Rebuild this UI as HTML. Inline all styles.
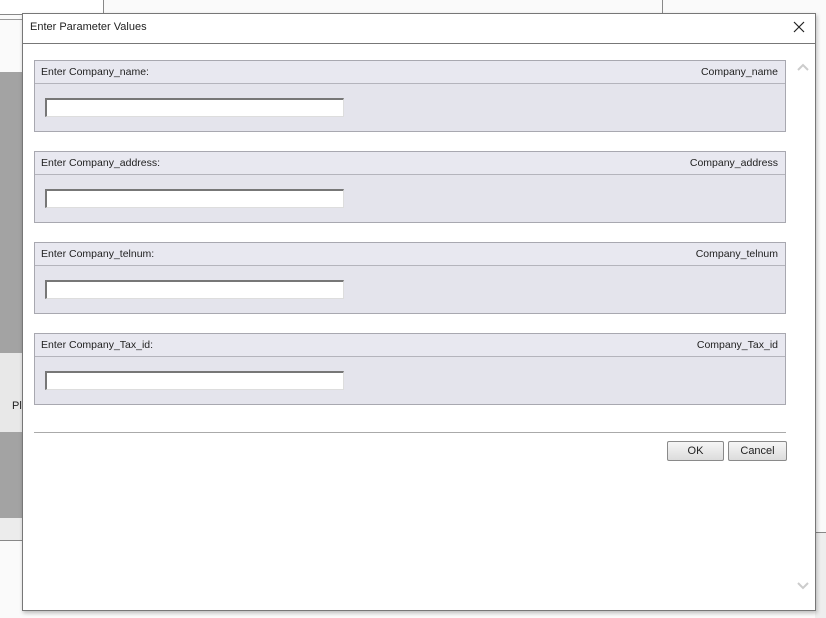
<!DOCTYPE html>
<html><head><style>
body{margin:0;width:826px;height:618px;position:relative;overflow:hidden;background:#f3f3f3;font-family:"Liberation Sans",sans-serif;font-size:10.5px;color:#222}
.a{position:absolute}
.panel{position:absolute;left:34px;width:750px;height:70px;border:1px solid #a8a8b0;background:#e4e4ec}
.hd{position:absolute;left:0;right:0;top:0;height:22px;border-bottom:1px solid #b4b4bc;background:#e8e8f0}
.hd .l{position:absolute;left:6px;top:5px}
.hd .r{position:absolute;right:7px;top:5px}
.in{position:absolute;left:10px;top:37px;width:296px;height:16px;background:#fff;border-top:2px solid #777;border-left:2px solid #777;border-right:1px solid #ddd;border-bottom:1px solid #ddd}
.btn{position:absolute;top:441px;height:18px;border:1px solid #8a8a8a;border-radius:2px;background:linear-gradient(#f6f6f6,#dcdcdc);text-align:center;line-height:18px;font-size:11px}
</style></head><body>
<div class="a" style="left:0;top:0;width:826px;height:618px;background:#fafafa"></div>
<div class="a" style="left:0;top:0;width:103px;height:14px;border:1px solid #888;border-top:none;border-left:none;background:#fff"></div>
<div class="a" style="left:0;top:19px;width:22px;height:1px;background:#999"></div>
<div class="a" style="left:0;top:72px;width:22px;height:281px;background:#a3a3a3"></div>
<div class="a" style="left:0;top:353px;width:22px;height:79px;background:#e8e8e8"></div>
<div class="a" style="left:12px;top:400px;font-size:11px">Pl</div>
<div class="a" style="left:0;top:432px;width:22px;height:86px;background:#a3a3a3"></div>
<div class="a" style="left:0;top:518px;width:22px;height:22px;background:#ececec"></div>
<div class="a" style="left:0;top:540px;width:22px;height:1px;background:#888"></div>
<div class="a" style="left:662px;top:0;width:1px;height:13px;background:#888"></div>
<div class="a" style="left:815px;top:532px;width:11px;height:1px;background:#888"></div>
<div class="a" style="left:815px;top:533px;width:11px;height:85px;background:#eee"></div>
<div class="a" style="left:22px;top:13px;width:792px;height:596px;border:1px solid #777;background:#fff;box-shadow:1px 2px 4px rgba(0,0,0,.25)"></div>
<div class="a" style="left:23px;top:43px;width:792px;height:1px;background:#777"></div>
<div class="a" style="left:30px;top:21px;font-size:11px">Enter Parameter Values</div>
<svg class="a" style="left:793px;top:21px" width="12" height="12"><path d="M1 1L11 11M11 1L1 11" stroke="#222" stroke-width="1.2"/></svg>
<svg class="a" style="left:797px;top:63px" width="12" height="8"><path d="M1 7L6 2L11 7" stroke="#ccc" stroke-width="2" fill="none"/></svg>
<svg class="a" style="left:797px;top:582px" width="12" height="8"><path d="M1 1L6 6L11 1" stroke="#ccc" stroke-width="2" fill="none"/></svg>

<div class="panel" style="top:60px"><div class="hd"><span class="l">Enter Company_name:</span><span class="r">Company_name</span></div><div class="in"></div></div>
<div class="panel" style="top:151px"><div class="hd"><span class="l">Enter Company_address:</span><span class="r">Company_address</span></div><div class="in"></div></div>
<div class="panel" style="top:242px"><div class="hd"><span class="l">Enter Company_telnum:</span><span class="r">Company_telnum</span></div><div class="in"></div></div>
<div class="panel" style="top:333px"><div class="hd"><span class="l">Enter Company_Tax_id:</span><span class="r">Company_Tax_id</span></div><div class="in"></div></div>

<div class="a" style="left:34px;top:432px;width:752px;height:1px;background:#aaa"></div>
<div class="btn" style="left:667px;width:55px">OK</div>
<div class="btn" style="left:728px;width:57px">Cancel</div>
</body></html>
